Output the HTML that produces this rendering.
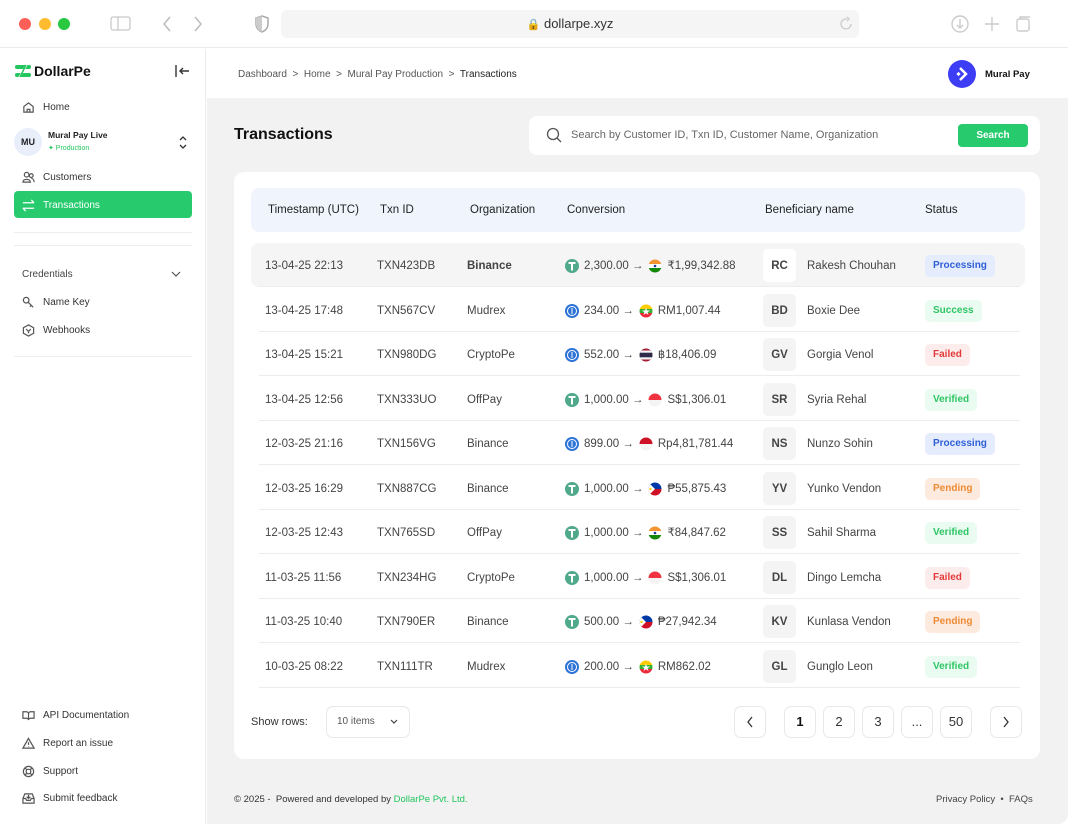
<!DOCTYPE html>
<html><head><meta charset="utf-8"><style>
*{box-sizing:border-box;margin:0;padding:0}
body{width:1068px;height:824px;overflow:hidden;font-family:"Liberation Sans",sans-serif;background:#fff;position:relative;color:#222}
.abs{position:absolute}
.chrome{left:0;top:0;width:1068px;height:48px;background:#fff;border-bottom:1px solid #e8eceb}
.dot{width:12px;height:12px;border-radius:50%;top:18px}
.url{left:281px;top:10px;width:578px;height:28px;background:#f5f5f5;border-radius:6px;font-size:13px;color:#333;text-align:center;line-height:28px}
.side{left:0;top:49px;width:206px;height:775px;background:#fff;border-right:1px solid #ececec}
.nav{position:absolute;left:22px;font-size:10px;color:#333;display:flex;align-items:center;gap:8px}
.nav svg{width:13px;height:13px;stroke:#555;fill:none;stroke-width:1.3}
.hdr{left:207px;top:49px;width:861px;height:49px;background:#fff}
.main{left:207px;top:98px;width:861px;height:726px;background:#f2f2f2;border-bottom-right-radius:10px}
.card{left:234px;top:172px;width:806px;height:587px;background:#fff;border-radius:10px}
.th{left:251px;top:188px;width:774px;height:44px;background:#eff4fd;border-radius:8px;font-size:11.5px;color:#222}
.th span{position:absolute;top:16px}
.row{position:absolute;left:251px;width:774px;height:44px;font-size:11.5px;color:#444}
.row .sep{position:absolute;left:8px;right:5px;bottom:0;height:1px;background:#ececec}
.row span.c{position:absolute;top:17px}
.av{position:absolute;left:512px;top:6px;width:33px;height:33px;border-radius:5px;background:#f4f4f4;font-size:11.5px;text-align:center;line-height:35px;color:#444;font-weight:bold}
.badge{position:absolute;left:674px;top:12px;height:22px;padding:0 8px;border-radius:5px;font-size:10px;font-weight:bold;line-height:22px}
.P{background:#e4ecfd;color:#2f5fd6}.S,.V{background:#eafcf1;color:#2ec565}.F{background:#fdecec;color:#e53939}.N{background:#fdeadf;color:#ef8a34}
.cv{position:absolute;left:314px;top:16px;display:flex;align-items:center;gap:5px;line-height:14px}
.cv svg{width:14px;height:14px}
.pg{position:absolute;top:706px;width:32px;height:32px;border:1px solid #e8e8e8;border-radius:7px;font-size:13px;text-align:center;line-height:30px;color:#333;background:#fff}
.pg svg{position:absolute;left:11px;top:9px}
</style></head><body>
<div class="abs chrome"></div>
<div class="abs dot" style="left:19px;background:#fe5f57"></div>
<div class="abs dot" style="left:39px;background:#febc2e"></div>
<div class="abs dot" style="left:58px;background:#28c840"></div>
<svg class="abs" style="left:110px;top:16px" width="22" height="16"><rect x="1" y="1" width="19" height="13" rx="2" fill="none" stroke="#bbb"/><line x1="8" y1="1" x2="8" y2="14" stroke="#bbb"/></svg>
<svg class="abs" style="left:160px;top:15px" width="50" height="18" fill="none" stroke="#bbb" stroke-width="1.5"><path d="M10 2 L4 9 L10 16"/><path d="M35 2 L41 9 L35 16"/></svg>
<svg class="abs" style="left:254px;top:15px" width="16" height="18"><path d="M8 1 L14 3 V9 C14 13 11 16 8 17 C5 16 2 13 2 9 V3Z" fill="none" stroke="#aaa" stroke-width="1.5"/><path d="M8 1 V17 C5 16 2 13 2 9 V3Z" fill="#ccc"/></svg>
<div class="abs url"><span style="font-size:11px">🔒</span> dollarpe.xyz</div>
<svg class="abs" style="left:838px;top:16px" width="16" height="16" fill="none" stroke="#ccc" stroke-width="1.3"><path d="M13 8 A5 5 0 1 1 9 3 M9 1 L11 3 L9 5"/></svg>
<svg class="abs" style="left:950px;top:14px" width="80" height="20" fill="none" stroke="#ccc" stroke-width="1.4"><circle cx="10" cy="10" r="8"/><path d="M10 5 V14 M7 11 L10 14 L13 11"/><path d="M42 3 V17 M35 10 H49"/><rect x="67" y="5" width="12" height="12" rx="2"/><path d="M70 5 V3 H81 V14 H79"/></svg>

<div class="abs side"></div>
<svg class="abs" style="left:13px;top:63px" width="20" height="16"><rect x="2" y="2" width="16" height="4" rx="2" fill="#22c55e"/><rect x="2" y="10" width="16" height="4" rx="2" fill="#22c55e"/><path d="M14 1 L6 15" stroke="#fff" stroke-width="2"/><path d="M13 2 L7 14" stroke="#22c55e" stroke-width="1.5"/></svg>
<div class="abs" style="left:34px;top:63px;font-size:14px;font-weight:bold;color:#111">DollarPe</div>
<svg class="abs" style="left:174px;top:64px" width="16" height="14" fill="none" stroke="#333" stroke-width="1.4"><path d="M2 1 V13 M15 7 H6 M9 4 L6 7 L9 10"/></svg>
<div class="nav" style="top:101px"><svg viewBox="0 0 14 14"><path d="M2 6 L7 2 L12 6 V12 H2Z M5.5 12 V9 H8.5 V12"/></svg>Home</div>
<div class="abs" style="left:14px;top:128px;width:28px;height:28px;border-radius:50%;background:#e9eefb;font-size:9px;font-weight:bold;text-align:center;line-height:28px">MU</div>
<div class="abs" style="left:48px;top:130px;font-size:8.5px;font-weight:bold">Mural Pay Live</div>
<div class="abs" style="left:48px;top:144px;font-size:7px;color:#22c55e">✦ Production</div>
<svg class="abs" style="left:178px;top:136px" width="10" height="13" fill="none" stroke="#333" stroke-width="1.3"><path d="M2 4 L5 1 L8 4 M2 9 L5 12 L8 9"/></svg>
<div class="nav" style="top:171px"><svg viewBox="0 0 14 14"><circle cx="5" cy="4" r="2.5"/><path d="M1 12 C1 8 9 8 9 12Z"/><circle cx="10" cy="5" r="2"/><path d="M10 8 C12 8 13 10 13 12"/></svg>Customers</div>
<div class="abs" style="left:14px;top:191px;width:178px;height:27px;background:#27cb6e;border-radius:4px"></div>
<div class="nav" style="top:199px;color:#fff"><svg viewBox="0 0 14 14" style="stroke:#fff"><path d="M1 4 H13 M10 1 L13 4 M13 10 H1 M4 13 L1 10"/></svg>Transactions</div>
<div class="abs" style="left:14px;top:232px;width:178px;height:1px;background:#eee"></div>
<div class="abs" style="left:14px;top:245px;width:178px;height:1px;background:#eee"></div>
<div class="abs" style="left:22px;top:269px;font-size:10px;color:#444">Credentials</div>
<svg class="abs" style="left:171px;top:271px" width="10" height="7" fill="none" stroke="#555" stroke-width="1.2"><path d="M1 1 L5 5 L9 1"/></svg>
<div class="nav" style="top:296px"><svg viewBox="0 0 14 14"><circle cx="4.5" cy="4.5" r="3"/><path d="M6.5 6.5 L12 12 M10 10 L8.5 11.5"/></svg>Name Key</div>
<div class="nav" style="top:324px"><svg viewBox="0 0 14 14"><path d="M7 1 L12.5 4 V10 L7 13 L1.5 10 V4Z M4.5 5.5 L7 8 L9.5 5.5 M7 8 V10"/></svg>Webhooks</div>
<div class="abs" style="left:14px;top:356px;width:178px;height:1px;background:#eee"></div>
<div class="nav" style="top:709px"><svg viewBox="0 0 14 14"><path d="M1 3 H5 C6 3 7 4 7 5 V12 C7 11 6 10 5 10 H1Z M13 3 H9 C8 3 7 4 7 5 V12 C7 11 8 10 9 10 H13Z"/></svg>API Documentation</div>
<div class="nav" style="top:737px"><svg viewBox="0 0 14 14"><path d="M7 1.5 L13 12 H1Z M7 5.5 V8.5 M7 10 V10.5"/></svg>Report an issue</div>
<div class="nav" style="top:765px"><svg viewBox="0 0 14 14"><circle cx="7" cy="7" r="5.5"/><circle cx="7" cy="7" r="2.5"/><path d="M3 3 L5.2 5.2 M11 3 L8.8 5.2 M3 11 L5.2 8.8 M11 11 L8.8 8.8"/></svg>Support</div>
<div class="nav" style="top:792px"><svg viewBox="0 0 14 14"><path d="M1 7 V12 H13 V7 L11 2 H3Z M1 7 H4 L5 9 H9 L10 7 H13 M7 3 V7 M5 5 L7 7 L9 5"/></svg>Submit feedback</div>

<div class="abs hdr"></div>
<div class="abs" style="left:238px;top:69px;font-size:10px;color:#555">Dashboard &nbsp;&gt;&nbsp; Home &nbsp;&gt;&nbsp; Mural Pay Production &nbsp;&gt;&nbsp; <span style="color:#222">Transactions</span></div>
<div class="abs" style="left:948px;top:60px;width:28px;height:28px;border-radius:50%;background:#3d3df5"></div>
<svg class="abs" style="left:955px;top:66px" width="14" height="16"><path d="M5 2 L11 8 L5 14" fill="none" stroke="#fff" stroke-width="2.5"/><rect x="2" y="6.5" width="3" height="3" fill="#fff" transform="rotate(45 3.5 8)"/></svg>
<div class="abs" style="left:985px;top:69px;font-size:9.5px;font-weight:bold;color:#111">Mural Pay</div>

<div class="abs main"></div>
<div class="abs" style="left:234px;top:126px;font-size:16px;font-weight:bold;color:#111">Transactions</div>
<div class="abs" style="left:529px;top:116px;width:511px;height:39px;background:#fff;border-radius:8px"></div>
<svg class="abs" style="left:546px;top:127px" width="16" height="16" fill="none" stroke="#555" stroke-width="1.3"><circle cx="7" cy="7" r="5.5"/><path d="M11 11 L15 15"/></svg>
<div class="abs" style="left:571px;top:129px;font-size:11px;color:#666">Search by Customer ID, Txn ID, Customer Name, Organization</div>
<div class="abs" style="left:958px;top:124px;width:70px;height:23px;background:#27cb6e;border-radius:4px;color:#fff;font-size:10px;font-weight:bold;text-align:center;line-height:23px">Search</div>

<div class="abs card"></div>
<div class="abs th"><span style="left:17px">Timestamp (UTC)</span><span style="left:129px">Txn ID</span><span style="left:219px">Organization</span><span style="left:316px">Conversion</span><span style="left:514px">Beneficiary name</span><span style="left:674px">Status</span></div>

<svg width="0" height="0" style="position:absolute"><defs>
<g id="t"><circle cx="7" cy="7" r="7" fill="#4fa98a"/><path d="M3.5 4 H10.5 M7 4 V11.5" stroke="#fff" stroke-width="2"/></g>
<g id="u"><circle cx="7" cy="7" r="7" fill="#2d74d6"/><circle cx="7" cy="7" r="4.5" fill="none" stroke="#fff" stroke-width="1"/><path d="M7 4 V10" stroke="#fff" stroke-width="1"/></g>
<clipPath id="cc"><circle cx="7" cy="7" r="6.5"/></clipPath>
<g id="in" clip-path="url(#cc)"><rect width="14" height="5" fill="#f39433"/><rect y="5" width="14" height="4" fill="#fff"/><rect y="9" width="14" height="5" fill="#138808"/><circle cx="7" cy="7" r="1.3" fill="#1a3d9c"/></g>
<g id="my" clip-path="url(#cc)"><rect width="14" height="5" fill="#fecb00"/><rect y="5" width="14" height="4" fill="#34b233"/><rect y="9" width="14" height="5" fill="#ea2839"/><path d="M7 3.5 L8 6.5 L11 6.5 L8.6 8.3 L9.5 11 L7 9.3 L4.5 11 L5.4 8.3 L3 6.5 L6 6.5Z" fill="#fff"/></g>
<g id="th" clip-path="url(#cc)"><rect width="14" height="14" fill="#a51931"/><rect y="2.5" width="14" height="9" fill="#f4f5f8"/><rect y="4.7" width="14" height="4.6" fill="#2d2a4a"/></g>
<g id="sg" clip-path="url(#cc)"><rect width="14" height="7" fill="#ef3340"/><rect y="7" width="14" height="7" fill="#f4f4f4"/></g>
<g id="id" clip-path="url(#cc)"><rect width="14" height="7" fill="#ce1126"/><rect y="7" width="14" height="7" fill="#f4f4f4"/></g>
<g id="ph" clip-path="url(#cc)"><rect width="14" height="7" fill="#0038a8"/><rect y="7" width="14" height="7" fill="#ce1126"/><path d="M0 0 L7 7 L0 14Z" fill="#fff"/><circle cx="2.5" cy="7" r="1.2" fill="#fcd116"/></g>
</defs></svg>

<div class="row" style="top:243px"><div style="position:absolute;inset:0;background:#f5f5f5;border-radius:8px"></div><div class="sep"></div><span class="c" style="left:14px">13-04-25 22:13</span><span class="c" style="left:126px">TXN423DB</span><span class="c" style="left:216px;font-weight:bold;color:#444">Binance</span><div class="cv"><svg><use href="#t"/></svg>2,300.00 →<svg><use href="#in"/></svg>₹1,99,342.88</div><div class="av" style="background:#fff">RC</div><span class="c" style="left:556px">Rakesh Chouhan</span><div class="badge P">Processing</div></div>
<div class="row" style="top:288px"><div class="sep"></div><span class="c" style="left:14px">13-04-25 17:48</span><span class="c" style="left:126px">TXN567CV</span><span class="c" style="left:216px">Mudrex</span><div class="cv"><svg><use href="#u"/></svg>234.00 →<svg><use href="#my"/></svg>RM1,007.44</div><div class="av">BD</div><span class="c" style="left:556px">Boxie Dee</span><div class="badge S">Success</div></div>
<div class="row" style="top:332px"><div class="sep"></div><span class="c" style="left:14px">13-04-25 15:21</span><span class="c" style="left:126px">TXN980DG</span><span class="c" style="left:216px">CryptoPe</span><div class="cv"><svg><use href="#u"/></svg>552.00 →<svg><use href="#th"/></svg>฿18,406.09</div><div class="av">GV</div><span class="c" style="left:556px">Gorgia Venol</span><div class="badge F">Failed</div></div>
<div class="row" style="top:377px"><div class="sep"></div><span class="c" style="left:14px">13-04-25 12:56</span><span class="c" style="left:126px">TXN333UO</span><span class="c" style="left:216px">OffPay</span><div class="cv"><svg><use href="#t"/></svg>1,000.00 →<svg><use href="#sg"/></svg>S$1,306.01</div><div class="av">SR</div><span class="c" style="left:556px">Syria Rehal</span><div class="badge V">Verified</div></div>
<div class="row" style="top:421px"><div class="sep"></div><span class="c" style="left:14px">12-03-25 21:16</span><span class="c" style="left:126px">TXN156VG</span><span class="c" style="left:216px">Binance</span><div class="cv"><svg><use href="#u"/></svg>899.00 →<svg><use href="#id"/></svg>Rp4,81,781.44</div><div class="av">NS</div><span class="c" style="left:556px">Nunzo Sohin</span><div class="badge P">Processing</div></div>
<div class="row" style="top:466px"><div class="sep"></div><span class="c" style="left:14px">12-03-25 16:29</span><span class="c" style="left:126px">TXN887CG</span><span class="c" style="left:216px">Binance</span><div class="cv"><svg><use href="#t"/></svg>1,000.00 →<svg><use href="#ph"/></svg>₱55,875.43</div><div class="av">YV</div><span class="c" style="left:556px">Yunko Vendon</span><div class="badge N">Pending</div></div>
<div class="row" style="top:510px"><div class="sep"></div><span class="c" style="left:14px">12-03-25 12:43</span><span class="c" style="left:126px">TXN765SD</span><span class="c" style="left:216px">OffPay</span><div class="cv"><svg><use href="#t"/></svg>1,000.00 →<svg><use href="#in"/></svg>₹84,847.62</div><div class="av">SS</div><span class="c" style="left:556px">Sahil Sharma</span><div class="badge V">Verified</div></div>
<div class="row" style="top:555px"><div class="sep"></div><span class="c" style="left:14px">11-03-25 11:56</span><span class="c" style="left:126px">TXN234HG</span><span class="c" style="left:216px">CryptoPe</span><div class="cv"><svg><use href="#t"/></svg>1,000.00 →<svg><use href="#sg"/></svg>S$1,306.01</div><div class="av">DL</div><span class="c" style="left:556px">Dingo Lemcha</span><div class="badge F">Failed</div></div>
<div class="row" style="top:599px"><div class="sep"></div><span class="c" style="left:14px">11-03-25 10:40</span><span class="c" style="left:126px">TXN790ER</span><span class="c" style="left:216px">Binance</span><div class="cv"><svg><use href="#t"/></svg>500.00 →<svg><use href="#ph"/></svg>₱27,942.34</div><div class="av">KV</div><span class="c" style="left:556px">Kunlasa Vendon</span><div class="badge N">Pending</div></div>
<div class="row" style="top:644px"><div class="sep"></div><span class="c" style="left:14px">10-03-25 08:22</span><span class="c" style="left:126px">TXN111TR</span><span class="c" style="left:216px">Mudrex</span><div class="cv"><svg><use href="#u"/></svg>200.00 →<svg><use href="#my"/></svg>RM862.02</div><div class="av">GL</div><span class="c" style="left:556px">Gunglo Leon</span><div class="badge V">Verified</div></div>

<div class="abs" style="left:251px;top:716px;font-size:11px;color:#333">Show rows:</div>
<div class="abs" style="left:326px;top:706px;width:84px;height:32px;border:1px solid #e8e8e8;border-radius:7px;font-size:10px;color:#555;line-height:30px;padding-left:10px">10 items<svg style="position:absolute;left:63px;top:12px" width="8" height="6" fill="none" stroke="#444" stroke-width="1.2"><path d="M1 1 L4 4 L7 1"/></svg></div>
<div class="pg" style="left:734px"><svg width="8" height="12" fill="none" stroke="#333" stroke-width="1.3"><path d="M6 1 L2 6 L6 11"/></svg></div>
<div class="pg" style="left:784px;font-weight:bold;color:#111">1</div>
<div class="pg" style="left:823px">2</div>
<div class="pg" style="left:862px">3</div>
<div class="pg" style="left:901px">...</div>
<div class="pg" style="left:940px">50</div>
<div class="pg" style="left:990px"><svg width="8" height="12" fill="none" stroke="#333" stroke-width="1.3"><path d="M2 1 L6 6 L2 11"/></svg></div>

<div class="abs" style="left:234px;top:794px;font-size:9.5px;color:#333">© 2025 - &nbsp;Powered and developed by <span style="color:#22c55e">DollarPe Pvt. Ltd.</span></div>
<div class="abs" style="left:936px;top:794px;font-size:9.5px;color:#444">Privacy Policy &nbsp;•&nbsp; FAQs</div>
</body></html>
